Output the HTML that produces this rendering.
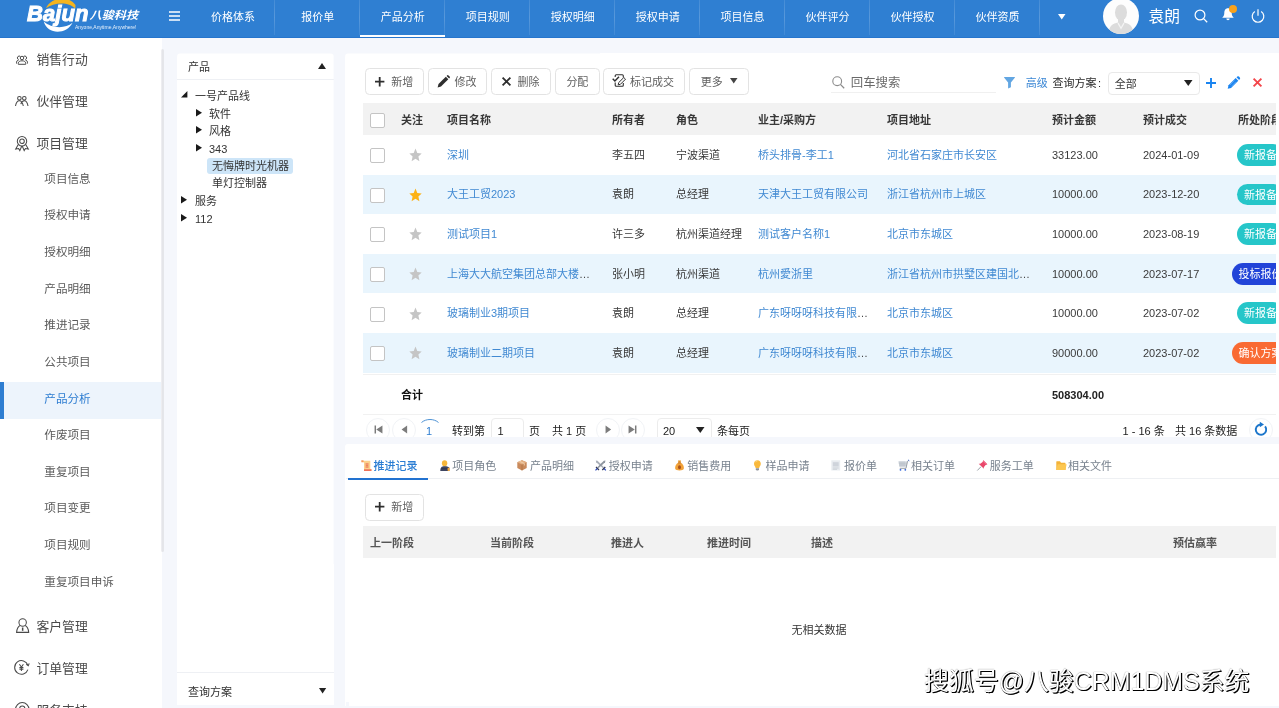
<!DOCTYPE html>
<html lang="zh-CN">
<head>
<meta charset="utf-8">
<title>八骏科技 CRM</title>
<style>
*{box-sizing:border-box;margin:0;padding:0}
html,body{width:1279px;height:708px;overflow:hidden;background:#f5f7fc}
body{font-family:"Liberation Sans","Noto Sans CJK SC",sans-serif;font-size:11px;color:#333;position:relative}
.abs,.t{position:absolute;white-space:nowrap}
.t{height:20px;line-height:20px;margin-top:-10px}
svg{position:absolute;overflow:visible}
/* header */
#hdr{position:absolute;left:0;top:0;width:1279px;height:38px;background:#2f7fd2;border-bottom:1px solid #2675cd}
.nav{position:absolute;top:0;height:38px;width:84.950px;text-align:center;line-height:34px;color:#fff;font-size:11px}
.nav:before{content:"";position:absolute;right:0;top:0;width:1px;height:35px;background:linear-gradient(rgba(255,255,255,.1),rgba(255,255,255,.2) 50%,rgba(255,255,255,.08))}
.nav.on:after{content:"";position:absolute;left:0;right:0;bottom:1px;height:2px;background:#fff}
/* sidebar */
#side{position:absolute;left:0;top:38px;width:162px;overflow:visible;height:670px;background:#fff}
.m1{position:absolute;left:36.5px;font-size:12.8px;color:#4a4a4a}
.m2{position:absolute;left:44.3px;font-size:11.6px;color:#5a5a5a}
/* tree */
#tree{position:absolute;left:177px;top:52px;width:156.7px;height:652.7px;background:#fff;clip-path:inset(1.5px 0 0 0 round 3px 3px 0 0)}
.tr{position:absolute;font-size:11px;color:#333}
/* panels */
#p1{position:absolute;left:345px;top:52px;width:934px;height:385px;background:#fff;border-left:1px solid #fff;overflow:hidden;clip-path:inset(1.5px 0 0 0 round 3px 0 0 0)}
#p2{position:absolute;left:345px;top:444px;width:934px;height:261.5px;background:#fff;border-left:1px solid #fff;overflow:hidden;border-radius:3px 0 0 0}
.btn{position:absolute;height:26.800px;border:1px solid #e3e3e3;border-radius:4.500px;background:#fff;color:#606060;font-size:11px;line-height:26px}
.th{position:absolute;font-weight:bold;font-size:11px;color:#383838}
.td{position:absolute;font-size:11px;color:#3a3a3a}
.lk{color:#4089d2}
.cb{position:absolute;width:15px;height:15px;border:1px solid #c4c4c4;border-radius:2px;background:#fff;margin-top:0.600px}
.row{position:absolute;left:363px;width:916px;height:39.5px}
.row.alt{background:#e9f5fd}
.tag{position:absolute;white-space:nowrap;height:21.800px;line-height:23px;border-radius:11px;color:#fff;font-size:11px;padding:0 7px;margin-top:-10.700px}
.tab{position:absolute;font-size:11px;color:#78828e}
#side,#tree,#p1,#p2,#hdr,#wm{will-change:transform}
.nav.last:before{display:none}
</style>
</head>
<body>
<div id="hdr">
<svg style="left:40px;top:0" width="50" height="34" viewBox="0 0 50 34"><path d="M6 8.300 C11 -3 28 -5 35.500 5 L35.300 8.600 C29 1.500 14 2 6 8.300Z" fill="#f4b41f"/><path d="M3.800 21.600 C7.500 35.500 27 34.500 32.500 22.800 C25 29.300 11 28.300 3.800 21.600Z" fill="#fff"/></svg>
<div class="abs" style="left:27px;top:2px;font-size:22px;line-height:24px;font-weight:bold;font-style:italic;color:#fff;letter-spacing:0.1px;-webkit-text-stroke:1px #fff">Bajun</div>
<div class="abs" style="left:89.5px;top:6.300px;font-size:12.200px;line-height:18px;font-weight:bold;font-style:italic;color:#fff;transform:scaleY(.9);transform-origin:0 50%">八骏科技</div>
<div class="abs" style="left:75px;top:23px;font-size:5px;line-height:8px;color:#e6f0fb">Anyone,Anytime,Anywhere!</div>
<svg style="left:169px;top:11px" width="11" height="10" viewBox="0 0 11 10"><path d="M0 1H11M0 5H11M0 9H11" stroke="#fff" stroke-width="1.4"/></svg>
<div class="nav" style="left:190.45px">价格体系</div>
<div class="nav" style="left:275.40px">报价单</div>
<div class="nav on" style="left:360.35px">产品分析</div>
<div class="nav" style="left:445.30px">项目规则</div>
<div class="nav" style="left:530.25px">授权明细</div>
<div class="nav" style="left:615.20px">授权申请</div>
<div class="nav" style="left:700.15px">项目信息</div>
<div class="nav" style="left:785.10px">伙伴评分</div>
<div class="nav" style="left:870.05px">伙伴授权</div>
<div class="nav" style="left:955.00px">伙伴资质</div>
<div class="nav last" style="left:1039.95px;width:43px"></div><svg style="left:1057.8px;top:13.8px" width="7.5" height="5.5" viewBox="0 0 7.5 5.5"><path d="M0 0 H7.5 L3.75 5.5Z" fill="#fff"/></svg>
<div class="abs" style="left:1103px;top:-2px;width:36px;height:36px;border-radius:18px;background:#fdfdfd;overflow:hidden"><svg style="left:0;top:0" width="36" height="36" viewBox="0 0 36 36"><ellipse cx="18" cy="14.500" rx="6" ry="8" fill="#dcdcdc"/><path d="M15 20 H21 V24.500 C26 25.500 29.500 27 31 36 H5 C6.500 27 10 25.500 15 24.500Z" fill="#dcdcdc"/><path d="M15.500 24.500 L18 29 L20.500 24.500 L21.500 25.500 L18 31.500 L14.500 25.500Z" fill="#f4f4f4"/></svg></div>
<div class="t" style="left:1148.5px;top:16.8px;font-size:15.8px;color:#fff">袁朗</div>
<svg style="left:1194px;top:9px" width="14" height="14" viewBox="0 0 14 14"><circle cx="6" cy="6" r="4.900" fill="none" stroke="#fff" stroke-width="1.200"/><path d="M9.600 9.600L13.200 13.200" stroke="#fff" stroke-width="1.300"/></svg>
<svg style="left:1221px;top:7px" width="14" height="15" viewBox="0 0 14 15"><path d="M7 1.200 C4.300 1.200 3.300 3.500 3.300 6 C3.300 8.500 2.500 9.500 1.200 10.700 H12.800 C11.500 9.500 10.700 8.500 10.700 6 C10.700 3.500 9.700 1.200 7 1.200Z M5.300 11.600 A1.700 1.700 0 0 0 8.700 11.600Z" fill="#fff"/></svg>
<div class="abs" style="left:1229.3px;top:5.300px;width:8px;height:8px;border-radius:4px;background:#f8a21c"></div>
<svg style="left:1250.6px;top:9.300px" width="14" height="14" viewBox="0 0 14 14"><path d="M3.800 2.600 A5.800 5.800 0 1 0 10.200 2.600" fill="none" stroke="#fff" stroke-width="1.200"/><path d="M7 0.300V6.800" stroke="#fff" stroke-width="1.200"/></svg>
</div>
<div id="side">
<div class="abs" style="left:0;top:344.2px;width:162px;height:36.800px;background:#edf4fc;border-left:4px solid #2e7dd1"></div>
<div class="t m1" style="top:22.2px">销售行动</div>
<div class="t m1" style="top:64.2px">伙伴管理</div>
<div class="t m1" style="top:106.2px">项目管理</div>
<div class="t m1" style="top:589.0px">客户管理</div>
<div class="t m1" style="top:631.4px">订单管理</div>
<div class="t m1" style="top:673.4px">服务支持</div>
<div class="t m2" style="top:140.6px">项目信息</div>
<div class="t m2" style="top:177.2px">授权申请</div>
<div class="t m2" style="top:213.9px">授权明细</div>
<div class="t m2" style="top:250.5px">产品明细</div>
<div class="t m2" style="top:287.2px">推进记录</div>
<div class="t m2" style="top:323.9px">公共项目</div>
<div class="t m2" style="top:360.5px;color:#2e7dd1">产品分析</div>
<div class="t m2" style="top:397.1px">作废项目</div>
<div class="t m2" style="top:433.8px">重复项目</div>
<div class="t m2" style="top:470.4px">项目变更</div>
<div class="t m2" style="top:507.1px">项目规则</div>
<div class="t m2" style="top:543.8px">重复项目申诉</div>
<svg style="left:16px;top:17.2px" width="12" height="10" viewBox="0 0 12 10"><circle cx="6" cy="3" r="1.750" stroke="#4a4a4a" stroke-width="1" fill="none"/><path d="M2.300 9.300 V8.300 C2.300 6.600 3.800 5.800 6 5.800 C8.200 5.800 9.700 6.600 9.700 8.300 V9.300Z" stroke="#4a4a4a" stroke-width="1" fill="none"/><path d="M4.400 1.500 A1.800 1.800 0 0 0 2 4.200 M7.600 1.500 A1.800 1.800 0 0 1 10 4.200 M0.600 8.600 C0.200 6.500 1.200 5 3 4.700 M11.400 8.600 C11.800 6.500 10.800 5 9 4.700" stroke="#4a4a4a" stroke-width="1" fill="none"/></svg>
<svg style="left:15.300px;top:57.8px" width="13.5" height="10.5" viewBox="0 0 13.5 10.5"><circle cx="4.400" cy="2.300" r="1.800" stroke="#4a4a4a" stroke-width="1.05" fill="none"/><circle cx="9.300" cy="2.300" r="1.800" stroke="#4a4a4a" stroke-width="1.05" fill="none"/><path d="M0.500 10 C1 7 2.500 4.800 4.400 4.800 C6.300 4.800 7.700 7 8.300 10 M5.800 8.200 C6.500 6 7.600 4.800 9.300 4.800 C11.200 4.800 12.500 7 13 10" stroke="#4a4a4a" stroke-width="1.05" fill="none"/></svg>
<svg style="left:15px;top:98.2px" width="14" height="15" viewBox="0 0 14 15"><circle cx="7" cy="5.200" r="4.700" stroke="#4a4a4a" stroke-width="1.05" fill="none"/><circle cx="7" cy="5.200" r="2.300" stroke="#4a4a4a" stroke-width="1.05" fill="none"/><path d="M3.300 8.600 L0.700 13 L3.600 12.600 L4.800 14.600 L6.800 10 M10.700 8.600 L13.300 13 L10.400 12.600 L9.200 14.600 L7.200 10" stroke="#4a4a4a" stroke-width="1.05" fill="none"/></svg>
<svg style="left:15.500px;top:580.0px" width="13.3" height="15" viewBox="0 0 13.3 15"><circle cx="6.650" cy="4.500" r="3.700" stroke="#4a4a4a" stroke-width="1.05" fill="none"/><path d="M4.200 7.600 C2 8.500 1 10.500 0.600 14.400 H12.700 C12.300 10.500 11.300 8.500 9.100 7.600" stroke="#4a4a4a" stroke-width="1.05" fill="none"/><path d="M6.650 9.500 V12.800" stroke="#4a4a4a" stroke-width="1.500" fill="none"/></svg>
<svg style="left:14.300px;top:622.2px" width="15.5" height="15" viewBox="0 0 15.5 15"><path d="M13.900 5.200 A6.800 6.800 0 1 0 13.900 9.600" stroke="#4a4a4a" stroke-width="1.05" fill="none"/><path d="M12.300 4.200 L14.300 5.600 L15.200 3.400" stroke="#4a4a4a" stroke-width="1.05" fill="none"/><path d="M5.400 4.200 L7.400 7 L9.400 4.200 M7.400 7 V11 M5.400 7.400 H9.400 M5.400 9.100 H9.400" stroke="#4a4a4a" stroke-width="1.05" fill="none"/></svg>
<svg style="left:14.500px;top:664.3px" width="14.5" height="14.5" viewBox="0 0 14.5 14.5"><circle cx="7.250" cy="7.250" r="6.700" stroke="#4a4a4a" stroke-width="1.05" fill="none"/><circle cx="7.250" cy="6.500" r="2.600" stroke="#4a4a4a" stroke-width="1.05" fill="none"/></svg>
<div class="abs" style="left:160.500px;top:11.0px;width:3.500px;height:503px;background:linear-gradient(to right,#f1f1f4,#e3e4e8 55%,#e6e7eb);border-radius:2px"></div>
</div>
<div id="tree">
<div class="t" style="left:11.0px;top:14.6px;font-size:11px;color:#333">产品</div>
<svg style="left:141.4px;top:11.3px" width="8" height="6" viewBox="0 0 8 6"><path d="M0 6 L4 0 L8 6Z" fill="#222"/></svg>
<div class="abs" style="left:0;top:27.0px;width:157px;height:1px;background:#eef0f4"></div>
<div class="abs" style="left:30.0px;top:105.9px;width:86.3px;height:16.4px;background:#cde5f8;border-radius:3px"></div>
<div class="t tr" style="left:18.0px;top:44.4px">一号产品线</div>
<svg style="left:4.4px;top:38.6px" width="6.4" height="6.4" viewBox="0 0 6.4 6.4"><path d="M6.400 0 V6.400 H0Z" fill="#1a1a1a"/></svg>
<div class="t tr" style="left:32.0px;top:61.5px">软件</div>
<svg style="left:18.8px;top:56.9px" width="6" height="7.4" viewBox="0 0 6 7.4"><path d="M0 0 L6 3.700 L0 7.400Z" fill="#1a1a1a"/></svg>
<div class="t tr" style="left:32.0px;top:78.8px">风格</div>
<svg style="left:18.8px;top:74.2px" width="6" height="7.4" viewBox="0 0 6 7.4"><path d="M0 0 L6 3.700 L0 7.400Z" fill="#1a1a1a"/></svg>
<div class="t tr" style="left:32.0px;top:96.5px">343</div>
<svg style="left:18.8px;top:91.9px" width="6" height="7.4" viewBox="0 0 6 7.4"><path d="M0 0 L6 3.700 L0 7.400Z" fill="#1a1a1a"/></svg>
<div class="t tr" style="left:35.0px;top:114.0px">无悔牌时光机器</div>
<div class="t tr" style="left:35.0px;top:131.4px">单灯控制器</div>
<div class="t tr" style="left:18.0px;top:149.0px">服务</div>
<svg style="left:3.8px;top:144.4px" width="6" height="7.4" viewBox="0 0 6 7.4"><path d="M0 0 L6 3.700 L0 7.400Z" fill="#1a1a1a"/></svg>
<div class="t tr" style="left:18.0px;top:166.5px">112</div>
<svg style="left:3.8px;top:161.9px" width="6" height="7.4" viewBox="0 0 6 7.4"><path d="M0 0 L6 3.700 L0 7.400Z" fill="#1a1a1a"/></svg>
<div class="abs" style="left:0;top:620.0px;width:157px;height:1px;background:#eef0f4"></div>
<div class="t" style="left:11.0px;top:640.0px;font-size:11px;color:#333">查询方案</div>
<svg style="left:142.0px;top:636.2px" width="7.2" height="5.6" viewBox="0 0 8 6"><path d="M0 0 H8 L4 6Z" fill="#222"/></svg>
</div>
<div id="p1">
<div class="btn" style="left:18.6px;top:16.0px;width:59.8px"><svg style="left:9.6px;top:7.7px" width="9.4" height="9.4" viewBox="0 0 9.4 9.4"><path d="M4.700 0V9.400M0 4.700H9.400" stroke="#2e2e2e" stroke-width="1.800"/></svg><span class="abs" style="left:25.6px;top:0">新增</span></div>
<div class="btn" style="left:82.2px;top:16.0px;width:59.3px"><svg style="left:7.7px;top:5.6px" width="13" height="13" viewBox="0 0 13 13"><path d="M0.600 12.400 L1.500 9 L8.800 1.700 L11.300 4.200 L4 11.500 Z" fill="#2e2e2e"/><path d="M9.600 0.900 L10.300 0.200 Q10.900 -0.200 11.500 0.400 L12.600 1.500 Q13.200 2.100 12.800 2.700 L12.100 3.400Z" fill="#2e2e2e"/></svg><span class="abs" style="left:25.4px;top:0">修改</span></div>
<div class="btn" style="left:145.2px;top:16.0px;width:59.6px"><svg style="left:10.2px;top:7.7px" width="9" height="9" viewBox="0 0 9 9"><path d="M0.600 0.600L8.400 8.400M8.400 0.600L0.600 8.400" stroke="#2e2e2e" stroke-width="1.800"/></svg><span class="abs" style="left:25.4px;top:0">删除</span></div>
<div class="btn" style="left:209.2px;top:16.0px;width:44.4px"><span class="abs" style="left:10.2px;top:0">分配</span></div>
<div class="btn" style="left:257.4px;top:16.0px;width:81.2px"><svg style="left:7.4px;top:5.3px" width="14.5" height="13" viewBox="0 0 14.5 13"><path d="M3.200 3 V1.700 Q3.200 0.700 4.200 0.700 H10.300 Q11.300 0.700 11.300 1.700 V3.500 M11.300 9 V11.300 Q11.300 12.300 10.300 12.300 H4.200 Q3.200 12.300 3.200 11.300 V8.500" fill="none" stroke="#2e2e2e" stroke-width="1.100"/><path d="M0.700 4.800 L2.900 7 L7 2.800" fill="none" stroke="#2e2e2e" stroke-width="1.400"/><path d="M6.200 10.800 L6.700 8.600 L11.800 3.500 L13.500 5.200 L8.400 10.300Z" fill="#fff" stroke="#2e2e2e" stroke-width="1"/></svg><span class="abs" style="left:25.7px;top:0">标记成交</span></div>
<div class="btn" style="left:343.2px;top:16.0px;width:59.4px"><span class="abs" style="left:10.6px;top:0">更多</span><svg style="left:39.6px;top:9.0px" width="7.5" height="5.6" viewBox="0 0 7.5 5.6"><path d="M0 0 H7.5 L3.75 5.6Z" fill="#444"/></svg></div>
<svg style="left:485.8px;top:24.3px" width="12.6" height="12.6" viewBox="0 0 12.6 12.6"><circle cx="5.200" cy="5.200" r="4.400" fill="none" stroke="#8c8c8c" stroke-width="1.100"/><path d="M8.400 8.400L12.200 12.200" stroke="#8c8c8c" stroke-width="1.300"/></svg>
<div class="t" style="left:504.8px;top:30.5px;font-size:12.400px;color:#6a6a6a">回车搜索</div>
<div class="abs" style="left:484.5px;top:39.8px;width:165px;height:1px;background:#f0f0f0"></div>
<svg style="left:658.0px;top:24.8px" width="11" height="11.4" viewBox="0 0 11 11.400"><path d="M0.300 0H10.700Q11.200 0.300 10.800 0.800L6.900 5.400V10.200L4.100 11.400V5.400L0.200 0.800Q-0.200 0.300 0.300 0Z" fill="#62a6e2"/></svg>
<div class="t" style="left:679.7px;top:30.5px;color:#3b87d5">高级</div>
<div class="t" style="left:706.6px;top:30.5px;color:#2a2a2a">查询方案<span style="margin-left:1.500px">:</span></div>
<div class="abs" style="left:762.2px;top:20.0px;width:91.5px;height:22.8px;border:1px solid #e9e9e9;border-radius:4px"></div>
<div class="t" style="left:768.7px;top:31.5px;color:#3a3a3a">全部</div>
<svg style="left:838.0px;top:27.6px" width="8.5" height="6" viewBox="0 0 8.5 6"><path d="M0 0 H8.5 L4.25 6Z" fill="#222"/></svg>
<svg style="left:860.0px;top:25.5px" width="10" height="10" viewBox="0 0 10 10"><path d="M5 0V10M0 5H10" stroke="#1a84f0" stroke-width="1.900"/></svg>
<svg style="left:881.4px;top:24.0px" width="13.4" height="13.4" viewBox="0 0 13.4 13.4"><path d="M0.700 12.700 L1.500 9.300 L8.700 2.100 L11.300 4.700 L4.100 11.900 Z" fill="#1a84f0"/><path d="M9.500 1.300 L10.300 0.500 Q11.200 -0.200 12 0.600 L12.800 1.400 Q13.600 2.200 12.900 3.100 L12.100 3.900Z" fill="#1a84f0"/><path d="M3 9 L7.500 4.500 M4.400 10.400 L8.900 5.900" stroke="#8cc0f7" stroke-width="0.500"/></svg>
<svg style="left:906.6px;top:26.1px" width="9" height="9" viewBox="0 0 9 9"><path d="M0.600 0.600L8.400 8.400M8.400 0.600L0.600 8.400" stroke="#f3454a" stroke-width="1.900"/></svg>
<div class="abs" style="left:17px;top:51px;width:913px;height:32px;background:#f2f2f2"></div>
<div class="cb" style="left:24px;top:60px"></div>
<div class="t th" style="left:55px;top:67.5px">关注</div>
<div class="t th" style="left:101px;top:67.5px">项目名称</div>
<div class="t th" style="left:266px;top:67.5px">所有者</div>
<div class="t th" style="left:330px;top:67.5px">角色</div>
<div class="t th" style="left:412px;top:67.5px">业主/采购方</div>
<div class="t th" style="left:541px;top:67.5px">项目地址</div>
<div class="t th" style="left:706px;top:67.5px">预计金额</div>
<div class="t th" style="left:797px;top:67.5px">预计成交</div>
<div class="t th" style="left:892px;top:67.5px">所处阶段</div>
<div class="cb" style="left:24px;top:95.7px"></div>
<svg style="left:63px;top:96.2px" width="13" height="14" viewBox="0 0 13 13" preserveAspectRatio="none"><path d="M6.500 0.500 L8.300 4.600 L12.700 5 L9.400 8 L10.400 12.300 L6.500 10 L2.600 12.300 L3.600 8 L0.300 5 L4.700 4.600Z" fill="#c5c5c5"/></svg>
<div class="t td lk" style="left:101px;top:102.7px">深圳</div>
<div class="t td" style="left:266px;top:102.7px">李五四</div>
<div class="t td" style="left:330px;top:102.7px">宁波渠道</div>
<div class="t td lk" style="left:412px;top:102.7px">桥头排骨-李工1</div>
<div class="t td lk" style="left:541px;top:102.7px">河北省石家庄市长安区</div>
<div class="t td" style="left:706px;top:102.7px">33123.00</div>
<div class="t td" style="left:797px;top:102.7px">2024-01-09</div>
<div class="tag" style="left:891.0px;top:102.7px;background:#26c6c9">新报备</div>
<div class="row alt" style="left:17px;top:122.6px"></div>
<div class="cb" style="left:24px;top:135.3px"></div>
<svg style="left:63px;top:135.8px" width="13" height="14" viewBox="0 0 13 13" preserveAspectRatio="none"><path d="M6.500 0.500 L8.300 4.600 L12.700 5 L9.400 8 L10.400 12.300 L6.500 10 L2.600 12.300 L3.600 8 L0.300 5 L4.700 4.600Z" fill="#fcb216"/></svg>
<div class="t td lk" style="left:101px;top:142.3px">大王工贸2023</div>
<div class="t td" style="left:266px;top:142.3px">袁朗</div>
<div class="t td" style="left:330px;top:142.3px">总经理</div>
<div class="t td lk" style="left:412px;top:142.3px">天津大王工贸有限公司</div>
<div class="t td lk" style="left:541px;top:142.3px">浙江省杭州市上城区</div>
<div class="t td" style="left:706px;top:142.3px">10000.00</div>
<div class="t td" style="left:797px;top:142.3px">2023-12-20</div>
<div class="tag" style="left:891.0px;top:142.3px;background:#26c6c9">新报备</div>
<div class="cb" style="left:24px;top:174.9px"></div>
<svg style="left:63px;top:175.4px" width="13" height="14" viewBox="0 0 13 13" preserveAspectRatio="none"><path d="M6.500 0.500 L8.300 4.600 L12.700 5 L9.400 8 L10.400 12.300 L6.500 10 L2.600 12.300 L3.600 8 L0.300 5 L4.700 4.600Z" fill="#c5c5c5"/></svg>
<div class="t td lk" style="left:101px;top:181.9px">测试项目1</div>
<div class="t td" style="left:266px;top:181.9px">许三多</div>
<div class="t td" style="left:330px;top:181.9px">杭州渠道经理</div>
<div class="t td lk" style="left:412px;top:181.9px">测试客户名称1</div>
<div class="t td lk" style="left:541px;top:181.9px">北京市东城区</div>
<div class="t td" style="left:706px;top:181.9px">10000.00</div>
<div class="t td" style="left:797px;top:181.9px">2023-08-19</div>
<div class="tag" style="left:891.0px;top:181.9px;background:#26c6c9">新报备</div>
<div class="row alt" style="left:17px;top:201.8px"></div>
<div class="cb" style="left:24px;top:214.5px"></div>
<svg style="left:63px;top:215.0px" width="13" height="14" viewBox="0 0 13 13" preserveAspectRatio="none"><path d="M6.500 0.500 L8.300 4.600 L12.700 5 L9.400 8 L10.400 12.300 L6.500 10 L2.600 12.300 L3.600 8 L0.300 5 L4.700 4.600Z" fill="#c5c5c5"/></svg>
<div class="t td lk" style="left:101px;top:221.5px">上海大大航空集团总部大楼<span style="color:#444">…</span></div>
<div class="t td" style="left:266px;top:221.5px">张小明</div>
<div class="t td" style="left:330px;top:221.5px">杭州渠道</div>
<div class="t td lk" style="left:412px;top:221.5px">杭州愛浙里</div>
<div class="t td lk" style="left:541px;top:221.5px">浙江省杭州市拱墅区建国北<span style="color:#444">…</span></div>
<div class="t td" style="left:706px;top:221.5px">10000.00</div>
<div class="t td" style="left:797px;top:221.5px">2023-07-17</div>
<div class="tag" style="left:885.5px;top:221.5px;background:#2244d8">投标报价</div>
<div class="cb" style="left:24px;top:254.1px"></div>
<svg style="left:63px;top:254.6px" width="13" height="14" viewBox="0 0 13 13" preserveAspectRatio="none"><path d="M6.500 0.500 L8.300 4.600 L12.700 5 L9.400 8 L10.400 12.300 L6.500 10 L2.600 12.300 L3.600 8 L0.300 5 L4.700 4.600Z" fill="#c5c5c5"/></svg>
<div class="t td lk" style="left:101px;top:261.1px">玻璃制业3期项目</div>
<div class="t td" style="left:266px;top:261.1px">袁朗</div>
<div class="t td" style="left:330px;top:261.1px">总经理</div>
<div class="t td lk" style="left:412px;top:261.1px">广东呀呀呀科技有限<span style="color:#444">…</span></div>
<div class="t td lk" style="left:541px;top:261.1px">北京市东城区</div>
<div class="t td" style="left:706px;top:261.1px">10000.00</div>
<div class="t td" style="left:797px;top:261.1px">2023-07-02</div>
<div class="tag" style="left:891.0px;top:261.1px;background:#26c6c9">新报备</div>
<div class="row alt" style="left:17px;top:281.0px"></div>
<div class="cb" style="left:24px;top:293.7px"></div>
<svg style="left:63px;top:294.2px" width="13" height="14" viewBox="0 0 13 13" preserveAspectRatio="none"><path d="M6.500 0.500 L8.300 4.600 L12.700 5 L9.400 8 L10.400 12.300 L6.500 10 L2.600 12.300 L3.600 8 L0.300 5 L4.700 4.600Z" fill="#c5c5c5"/></svg>
<div class="t td lk" style="left:101px;top:300.7px">玻璃制业二期项目</div>
<div class="t td" style="left:266px;top:300.7px">袁朗</div>
<div class="t td" style="left:330px;top:300.7px">总经理</div>
<div class="t td lk" style="left:412px;top:300.7px">广东呀呀呀科技有限<span style="color:#444">…</span></div>
<div class="t td lk" style="left:541px;top:300.7px">北京市东城区</div>
<div class="t td" style="left:706px;top:300.7px">90000.00</div>
<div class="t td" style="left:797px;top:300.7px">2023-07-02</div>
<div class="tag" style="left:885.5px;top:300.7px;background:#f96a33">确认方案</div>
<div class="abs" style="left:17px;top:322px;width:913px;height:1px;background:#f1f1f1"></div>
<div class="t th" style="left:55px;top:342.8px;color:#111">合计</div>
<div class="t th" style="left:706px;top:342.8px;color:#222">508304.00</div>
<div class="abs" style="left:17px;top:362px;width:913px;height:1px;background:#f1f1f1"></div>
<div class="abs" style="left:930px;top:45px;width:4px;height:330px;background:#fff"></div>
<div class="abs" style="left:20.0px;top:365.5px;width:24px;height:24px;border-radius:12px;border:1px solid #f1f3f6"></div>
<div class="abs" style="left:46.3px;top:365.5px;width:24px;height:24px;border-radius:12px;border:1px solid #f1f3f6"></div>
<div class="abs" style="left:250.0px;top:365.5px;width:24px;height:24px;border-radius:12px;border:1px solid #f1f3f6"></div>
<div class="abs" style="left:274.6px;top:365.5px;width:24px;height:24px;border-radius:12px;border:1px solid #f1f3f6"></div>
<svg style="left:27.5px;top:373.3px" width="9.0" height="9.0" viewBox="0 0 8 8"><path d="M0.500 0.500V7.500H1.800V0.500Z M7.500 0.500V7.500L2 4Z" fill="#7c7c7c"/></svg>
<svg style="left:54.6px;top:373.3px" width="6.7" height="9.0" viewBox="0 0 6 8"><path d="M5.500 0.500V7.500L0.500 4Z" fill="#7c7c7c"/></svg>
<svg style="left:74.5px;top:365.5px" width="18" height="5" viewBox="0 0 18 5"><path d="M0.500 4.500 C5 0.500 13 0.500 17.500 4.500" fill="none" stroke="#3a86cf" stroke-width="0.900"/></svg>
<div class="t" style="left:80.0px;top:378.5px;color:#2e7dd1">1</div>
<div class="t" style="left:106.0px;top:378.5px;color:#222">转到第</div>
<div class="abs" style="left:144.5px;top:366.0px;width:33px;height:26px;border:1px solid #ececec;border-radius:4px"></div>
<div class="t" style="left:151.5px;top:378.5px;color:#222">1</div>
<div class="t" style="left:183.0px;top:378.5px;color:#222">页</div>
<div class="t" style="left:206.0px;top:378.5px;color:#222">共 1 页</div>
<svg style="left:258.6px;top:373.3px" width="6.7" height="9.0" viewBox="0 0 6 8"><path d="M0.500 0.500V7.500L5.500 4Z" fill="#7c7c7c"/></svg>
<svg style="left:282.0px;top:373.3px" width="9.0" height="9.0" viewBox="0 0 8 8"><path d="M7.500 0.500V7.500H6.200V0.500Z M0.500 0.500V7.500L6 4Z" fill="#7c7c7c"/></svg>
<div class="abs" style="left:310.5px;top:366.0px;width:55px;height:26px;border:1px solid #ececec;border-radius:4px"></div>
<div class="t" style="left:317.0px;top:378.5px;color:#222">20</div>
<svg style="left:349.8px;top:375.0px" width="8.5" height="6" viewBox="0 0 8.5 6"><path d="M0 0 H8.5 L4.25 6Z" fill="#222"/></svg>
<div class="t" style="left:371.0px;top:378.5px;color:#222">条每页</div>
<div class="t" style="left:776.5px;top:378.5px;color:#222">1 - 16 条</div>
<div class="t" style="left:829.0px;top:378.5px;color:#222">共 16 条数据</div>
<div class="abs" style="left:902.5px;top:365.5px;width:24px;height:24px;border-radius:12px;border:1px solid #f1f3f6"></div>
<svg style="left:907.7px;top:370.3px" width="14" height="14.5" viewBox="0 0 14 14.5"><path d="M11.10 4.40 A5.2 5.2 0 1 1 6.28 2.45" fill="none" stroke="#1c76cb" stroke-width="1.900"/><path d="M5.80 -0.20 L10.00 2.60 L5.80 5.30Z" fill="#1c76cb"/></svg>
</div>
<div id="p2">
<div class="abs" style="left:-1px;top:258.2px;width:4px;height:4px;background:#f5f7fc"></div>
<div class="abs" style="left:0;top:34.0px;width:933px;height:1px;background:#eef0f3"></div>
<div class="abs" style="left:2.0px;top:33.5px;width:80px;height:2px;background:#2272d0"></div>
<svg style="left:14.5px;top:15.7px" width="11.5" height="11" viewBox="0 0 11.5 11"><path d="M1.800 0.800 H9.300 V9 H10.300 V10.800 H3 V2.300 H1.800Z" fill="#fbd18c"/><path d="M0.300 0.300 H2.500 V2.300 H0.300Z" fill="#f59a5a"/><path d="M3 9.300 H10.500 V10.900 H3Z" fill="#f0735a"/><path d="M4.300 3 H7.800 V8 H4.300Z" fill="#f6a878"/><path d="M5 4 H7 M5 5.500 H7 M5 7 H7" stroke="#ea7a50" stroke-width="0.700"/></svg>
<div class="t tab" style="left:27.4px;top:21.6px;color:#2a7dd3;font-weight:500">推进记录</div>
<svg style="left:93.8px;top:15.7px" width="11.5" height="11" viewBox="0 0 11.5 11"><ellipse cx="4.600" cy="3.300" rx="2.700" ry="3.100" fill="#f7b73a"/><path d="M0.300 11 C0.300 7.500 1.500 6.200 4.600 6.200 C7 6.200 9.300 6.800 9.300 8 V11Z" fill="#3e4662"/><path d="M7.300 8.200 L9.600 7.600 V11 H7.800Z" fill="#f7a93a"/><path d="M1.500 8.700 H7.500" stroke="#2d3348" stroke-width="0.700"/></svg>
<div class="t tab" style="left:106.2px;top:21.6px">项目角色</div>
<svg style="left:171.4px;top:15.7px" width="11.5" height="11" viewBox="0 0 11.5 11"><path d="M5 0.300 L9.700 2.300 V7.900 L5 10.400 L0.300 7.900 V2.300Z" fill="#c98a5c"/><path d="M5 0.300 L9.700 2.300 L5 4.600 L0.300 2.300Z" fill="#e4b083"/><path d="M5 4.600 V10.400" stroke="#a66a3e" stroke-width="0.600"/><path d="M2.500 1.300 L7.300 3.500 V5.500" stroke="#f0d2b0" stroke-width="0.900" fill="none"/></svg>
<div class="t tab" style="left:184.1px;top:21.6px">产品明细</div>
<svg style="left:249.0px;top:15.7px" width="11.5" height="11" viewBox="0 0 11.5 11"><path d="M0.800 0.500 L2.500 0.800 L9 7.300 L8 8.300 L1.200 2.200Z" fill="#a9afb8"/><path d="M10.500 0.500 L8.800 0.800 L2.300 7.300 L3.300 8.300 L10.100 2.200Z" fill="#8f96a0"/><path d="M1 7 L4 10 M10.300 7 L7.300 10" stroke="#353a52" stroke-width="1.300"/><path d="M0.500 10.300 L2.300 8.500 M10.800 10.300 L9 8.500" stroke="#2a49b8" stroke-width="1.200"/></svg>
<div class="t tab" style="left:262.8px;top:21.6px">授权申请</div>
<svg style="left:329.0px;top:15.7px" width="11.5" height="11" viewBox="0 0 11.5 11"><path d="M3 0.600 H6 L5.500 2.800 H3.500Z" fill="#e0932a"/><path d="M3.300 2.600 H5.700 C8 4 9.200 6.500 8.800 8.800 C8.400 10.900 0.600 10.900 0.200 8.800 C-0.200 6.500 1 4 3.300 2.600Z" fill="#f2a238"/><ellipse cx="4.500" cy="7.300" rx="1.500" ry="2" fill="#a8521c"/><path d="M3 2.900 H6" stroke="#b8651e" stroke-width="0.700"/></svg>
<div class="t tab" style="left:341.3px;top:21.6px">销售费用</div>
<svg style="left:408.0px;top:15.7px" width="11.5" height="11" viewBox="0 0 11.5 11"><path d="M3.400 0.300 C5.600 0.300 6.800 1.900 6.800 3.800 C6.800 5.600 5.500 6.300 5.200 8 H1.600 C1.300 6.300 0 5.600 0 3.800 C0 1.900 1.200 0.300 3.400 0.300Z" fill="#f9b93c"/><path d="M1.500 1.800 C2 1.200 2.800 1 3.300 1" stroke="#fde6a8" stroke-width="0.800" fill="none"/><path d="M1.800 8.200 H5 V9.600 L4.200 10.600 H2.600 L1.800 9.600Z" fill="#8e9299"/></svg>
<div class="t tab" style="left:419.4px;top:21.6px">样品申请</div>
<svg style="left:485.4px;top:15.7px" width="11.5" height="11" viewBox="0 0 11.5 11"><path d="M0.300 0.300 H9.200 V10.500 H0.300Z" fill="#e9ecf0"/><path d="M1.800 2.200 H7.700 V6.500 H1.800Z" fill="#cfd4db"/><path d="M1.800 8 H7.700 M1.800 9.300 H6" stroke="#c2c8d0" stroke-width="0.700"/></svg>
<div class="t tab" style="left:498.0px;top:21.6px">报价单</div>
<svg style="left:552.2px;top:15.7px" width="11.5" height="11" viewBox="0 0 11.5 11"><path d="M0.300 1.300 H9 L8 6.800 H1.500Z" fill="#d5dae0"/><path d="M2 1.300 V6.800 M4 1.300 V6.800 M6 1.300 V6.800 M0.800 3.200 H8.600 M1.200 5 H8.300" stroke="#aab2bc" stroke-width="0.500"/><path d="M11 0.300 L9.500 1.300 L8 8.300 H1.800" stroke="#8a929c" stroke-width="0.900" fill="none"/><circle cx="2.500" cy="9.800" r="0.900" fill="#2e62d8"/><circle cx="7.300" cy="9.800" r="0.900" fill="#2e62d8"/><path d="M10.300 0 L11.300 0.800" stroke="#2e62d8" stroke-width="1"/></svg>
<div class="t tab" style="left:565.0px;top:21.6px">相关订单</div>
<svg style="left:630.8px;top:15.7px" width="11.5" height="11" viewBox="0 0 11.5 11"><path d="M6.300 0.300 L10.300 4.300 L8.600 4.900 L6.800 7.200 L6.900 8.800 L1.700 3.700 L3.300 3.700 L5.600 1.900Z" fill="#e9476b"/><path d="M6.300 0.300 L10.300 4.300 L9.300 4.700 L5.900 1.300Z" fill="#f2738f"/><path d="M4 6.700 L0.300 10.500" stroke="#8d949c" stroke-width="0.900"/></svg>
<div class="t tab" style="left:643.8px;top:21.6px">服务工单</div>
<svg style="left:709.6px;top:15.7px" width="11.5" height="11" viewBox="0 0 11.5 11"><path d="M0.300 1.800 Q0.300 1.300 0.800 1.300 H4 L5 2.700 H9 Q9.500 2.700 9.500 3.200 V10 H0.300Z" fill="#f4b338"/><path d="M0.300 10 L1.600 4.300 H10.600 L9.500 10Z" fill="#fcc751"/></svg>
<div class="t tab" style="left:722.0px;top:21.6px">相关文件</div>
<div class="btn" style="left:18.6px;top:49.9px;width:59.8px"><svg style="left:9.6px;top:6.8px" width="9.4" height="9.4" viewBox="0 0 9.4 9.4"><path d="M4.700 0V9.400M0 4.700H9.400" stroke="#2e2e2e" stroke-width="1.800"/></svg><span class="abs" style="left:25.6px;top:-0.900px">新增</span></div>
<div class="abs" style="left:17px;top:82px;width:913px;height:32px;background:#f2f2f2"></div>
<div class="t th" style="left:24px;top:98.5px;color:#555">上一阶段</div>
<div class="t th" style="left:144px;top:98.5px;color:#555">当前阶段</div>
<div class="t th" style="left:265px;top:98.5px;color:#555">推进人</div>
<div class="t th" style="left:361px;top:98.5px;color:#555">推进时间</div>
<div class="t th" style="left:465px;top:98.5px;color:#555">描述</div>
<div class="t th" style="left:827px;top:98.5px;color:#555">预估赢率</div>
<div class="t" style="left:17px;top:186px;width:912px;text-align:center;color:#333">无相关数据</div>
</div>
<div id="wm" class="abs" style="left:924px;top:663.500px;font-size:24.900px;line-height:34px;color:#fff;font-weight:400;text-shadow:1.300px 1.300px 0 #000,0.600px 0.600px 0 #000,0 0 1px rgba(0,0,0,.6)">搜狐号@八骏CRM1DMS系统</div>
</body>
</html>
